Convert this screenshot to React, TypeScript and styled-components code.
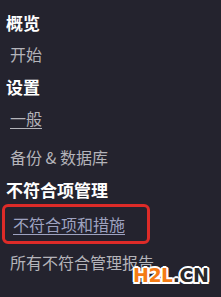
import React, { FunctionComponent } from 'react'
import styled, { createGlobalStyle } from 'styled-components'

const GlobalStyle = createGlobalStyle`
html, body {
    margin: 0;
    padding: 0;
    background: #24232e;
}
`

const Sidebar = styled.nav`
position: relative;
width: 221px;
height: 297px;
box-sizing: border-box;
padding: 6px 0 0 6px;
background: #24232e;
font-family: "Noto Sans CJK SC", "Noto Sans", sans-serif;
overflow: hidden;
`

const SectionTitle = styled.div<{ $h?: number }>`
display: flex;
align-items: center;
height: ${p => p.$h ?? 32}px;
font-size: 17px;
font-weight: 700;
color: #ffffff;
letter-spacing: 0;
`

const NavItem = styled.div<{ $gap?: number; $underline?: boolean; $active?: boolean }>`
display: flex;
align-items: center;
height: 32px;
margin-top: ${p => p.$gap ?? 0}px;
padding-left: 4px;
font-size: 16px;
color: ${p => (p.$active ? '#9ea2c0' : '#b4b4ba')};
text-decoration: ${p => (p.$underline ? 'underline' : 'none')};
text-underline-offset: 3px;
text-decoration-thickness: 1px;
`

const Highlight = styled.div`
display: flex;
align-items: flex-start;
width: 148px;
height: 40px;
box-sizing: border-box;
margin: -1px 0 2px -4px;
padding: 1px 0 0 4px;
border: 3px solid #dd2b28;
border-radius: 6px;
`

const Watermark = styled.div`
position: absolute;
left: 133px;
top: 264px;
font-family: "DejaVu Sans", sans-serif;
font-weight: 700;
font-size: 19px;
letter-spacing: -0.5px;
color: #2a2a2a;
text-shadow:
    -2px 0 #fff, 2px 0 #fff, 0 -2px #fff, 0 2px #fff,
    -1.5px -1.5px #fff, 1.5px 1.5px #fff, -1.5px 1.5px #fff, 1.5px -1.5px #fff;

span {
    color: #f47b14;
}
`

const App: FunctionComponent = () => {
    return (
        <>
            <GlobalStyle />
            <Sidebar>
                <SectionTitle>概览</SectionTitle>
                <NavItem>开始</NavItem>
                <SectionTitle>设置</SectionTitle>
                <NavItem $underline>一般</NavItem>
                <NavItem $gap={7}>备份 &amp; 数据库</NavItem>
                <SectionTitle>不符合项管理</SectionTitle>
                <Highlight>
                    <NavItem $underline $active>不符合项和措施</NavItem>
                </Highlight>
                <NavItem>所有不符合管理报告</NavItem>
                <Watermark><span>H2L</span>.CN</Watermark>
            </Sidebar>
        </>
    )
}

export default App
